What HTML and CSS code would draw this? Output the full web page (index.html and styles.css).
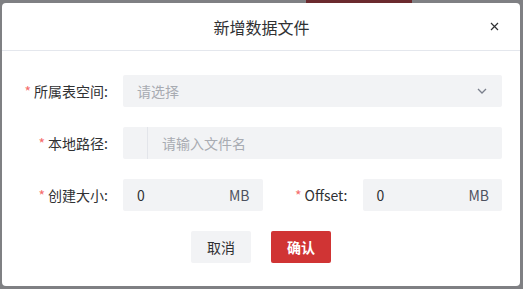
FILE: index.html
```html
<!doctype html>
<html lang="zh-CN">
<head>
    <meta charset="UTF-8">
    <title>新增数据文件</title>
    <link rel="stylesheet" href="styles.css">
</head>
<body>
<div class="backdrop">
    <div class="tab"></div>
</div>
<div class="dialog">
    <div class="header">
        <span class="title">新增数据文件</span>
        <span class="close">
            <svg width="9" height="9" viewBox="0 0 9 9"><path d="M1 1L8 8M8 1L1 8" stroke="#303133" stroke-width="1.2" fill="none"/></svg>
        </span>
    </div>
    <div class="body">
        <div class="row">
            <label class="label"><i>*</i>所属表空间:</label>
            <div class="field select">
                <span class="holder">请选择</span>
                <svg class="arrow" width="10" height="6" viewBox="0 0 10 6"><path d="M1 1L5 5L9 1" stroke="#7a7f8c" stroke-width="1.3" fill="none"/></svg>
            </div>
        </div>
        <div class="row">
            <label class="label"><i>*</i>本地路径:</label>
            <div class="field path">
                <span class="prefix"></span>
                <span class="holder">请输入文件名</span>
            </div>
        </div>
        <div class="row half">
            <div class="col">
                <label class="label"><i>*</i>创建大小:</label>
                <div class="field num">
                    <span class="value">0</span>
                    <span class="unit">MB</span>
                </div>
            </div>
            <div class="col">
                <label class="label"><i>*</i>Offset:</label>
                <div class="field num">
                    <span class="value">0</span>
                    <span class="unit">MB</span>
                </div>
            </div>
        </div>
        <div class="footer">
            <button class="btn cancel">取消</button>
            <button class="btn ok">确认</button>
        </div>
    </div>
</div>
</body>
</html>
```

FILE: styles.css
```css
*{
    margin: 0;
    padding: 0;
    box-sizing: border-box;
}
html,body{
    width: 100%;
    height: 100%;
}
body{
    background: #7f8083;
    font-family: "Noto Sans CJK SC", "Noto Sans", sans-serif;
    font-size: 14px;
    color: #303133;
    overflow: hidden;
}
.backdrop{
    height: 3px;
    display: flex;
}
.tab{
    margin-left: 306px;
    width: 106px;
    height: 3px;
    background: #6b2a2e;
}
.dialog{
    margin-left: 2px;
    width: 518px;
    height: 283px;
    background: #fff;
    border-radius: 4px;
}
.header{
    height: 48px;
    border-bottom: 1px solid #e4e7ed;
    display: flex;
    align-items: center;
    justify-content: center;
    position: relative;
}
.title{
    font-size: 16px;
    line-height: 22px;
    color: #303133;
    margin-left: 1px;
}
.close{
    position: absolute;
    right: 21px;
    top: 19px;
    width: 9px;
    height: 9px;
    display: flex;
}
.body{
    padding: 24px 18px 0 21px;
}
.row{
    display: flex;
    height: 32px;
    margin-bottom: 20px;
}
.half .col{
    flex: 1;
    display: flex;
}
.label{
    width: 100px;
    flex-shrink: 0;
    text-align: right;
    padding-right: 15px;
    line-height: 32px;
    color: #303133;
    white-space: nowrap;
}
.label i{
    font-style: normal;
    color: #f56c6c;
    margin-right: 3px;
}
.field{
    flex: 1;
    height: 32px;
    background: #f2f3f5;
    border-radius: 2px;
    display: flex;
    align-items: center;
    line-height: 32px;
    padding: 0 14px;
}
.holder{
    color: #a8abb2;
}
.select{
    justify-content: space-between;
    padding-right: 15px;
}
.path{
    padding-left: 0;
}
.prefix{
    width: 25px;
    height: 32px;
    border-right: 1px solid #e3e5ea;
    margin-right: 14px;
}
.num{
    justify-content: space-between;
    padding-right: 13px;
}
.unit{
    color: #4e5260;
}
.footer{
    display: flex;
    justify-content: center;
    gap: 20px;
    padding-right: 3px;
}
.btn{
    width: 60px;
    height: 32px;
    border: none;
    border-radius: 2px;
    font-family: inherit;
    font-size: 14px;
    line-height: 32px;
}
.cancel{
    background: #f2f3f5;
    color: #303133;
}
.ok{
    background: #d03434;
    color: #fff;
    font-weight: bold;
}
```
